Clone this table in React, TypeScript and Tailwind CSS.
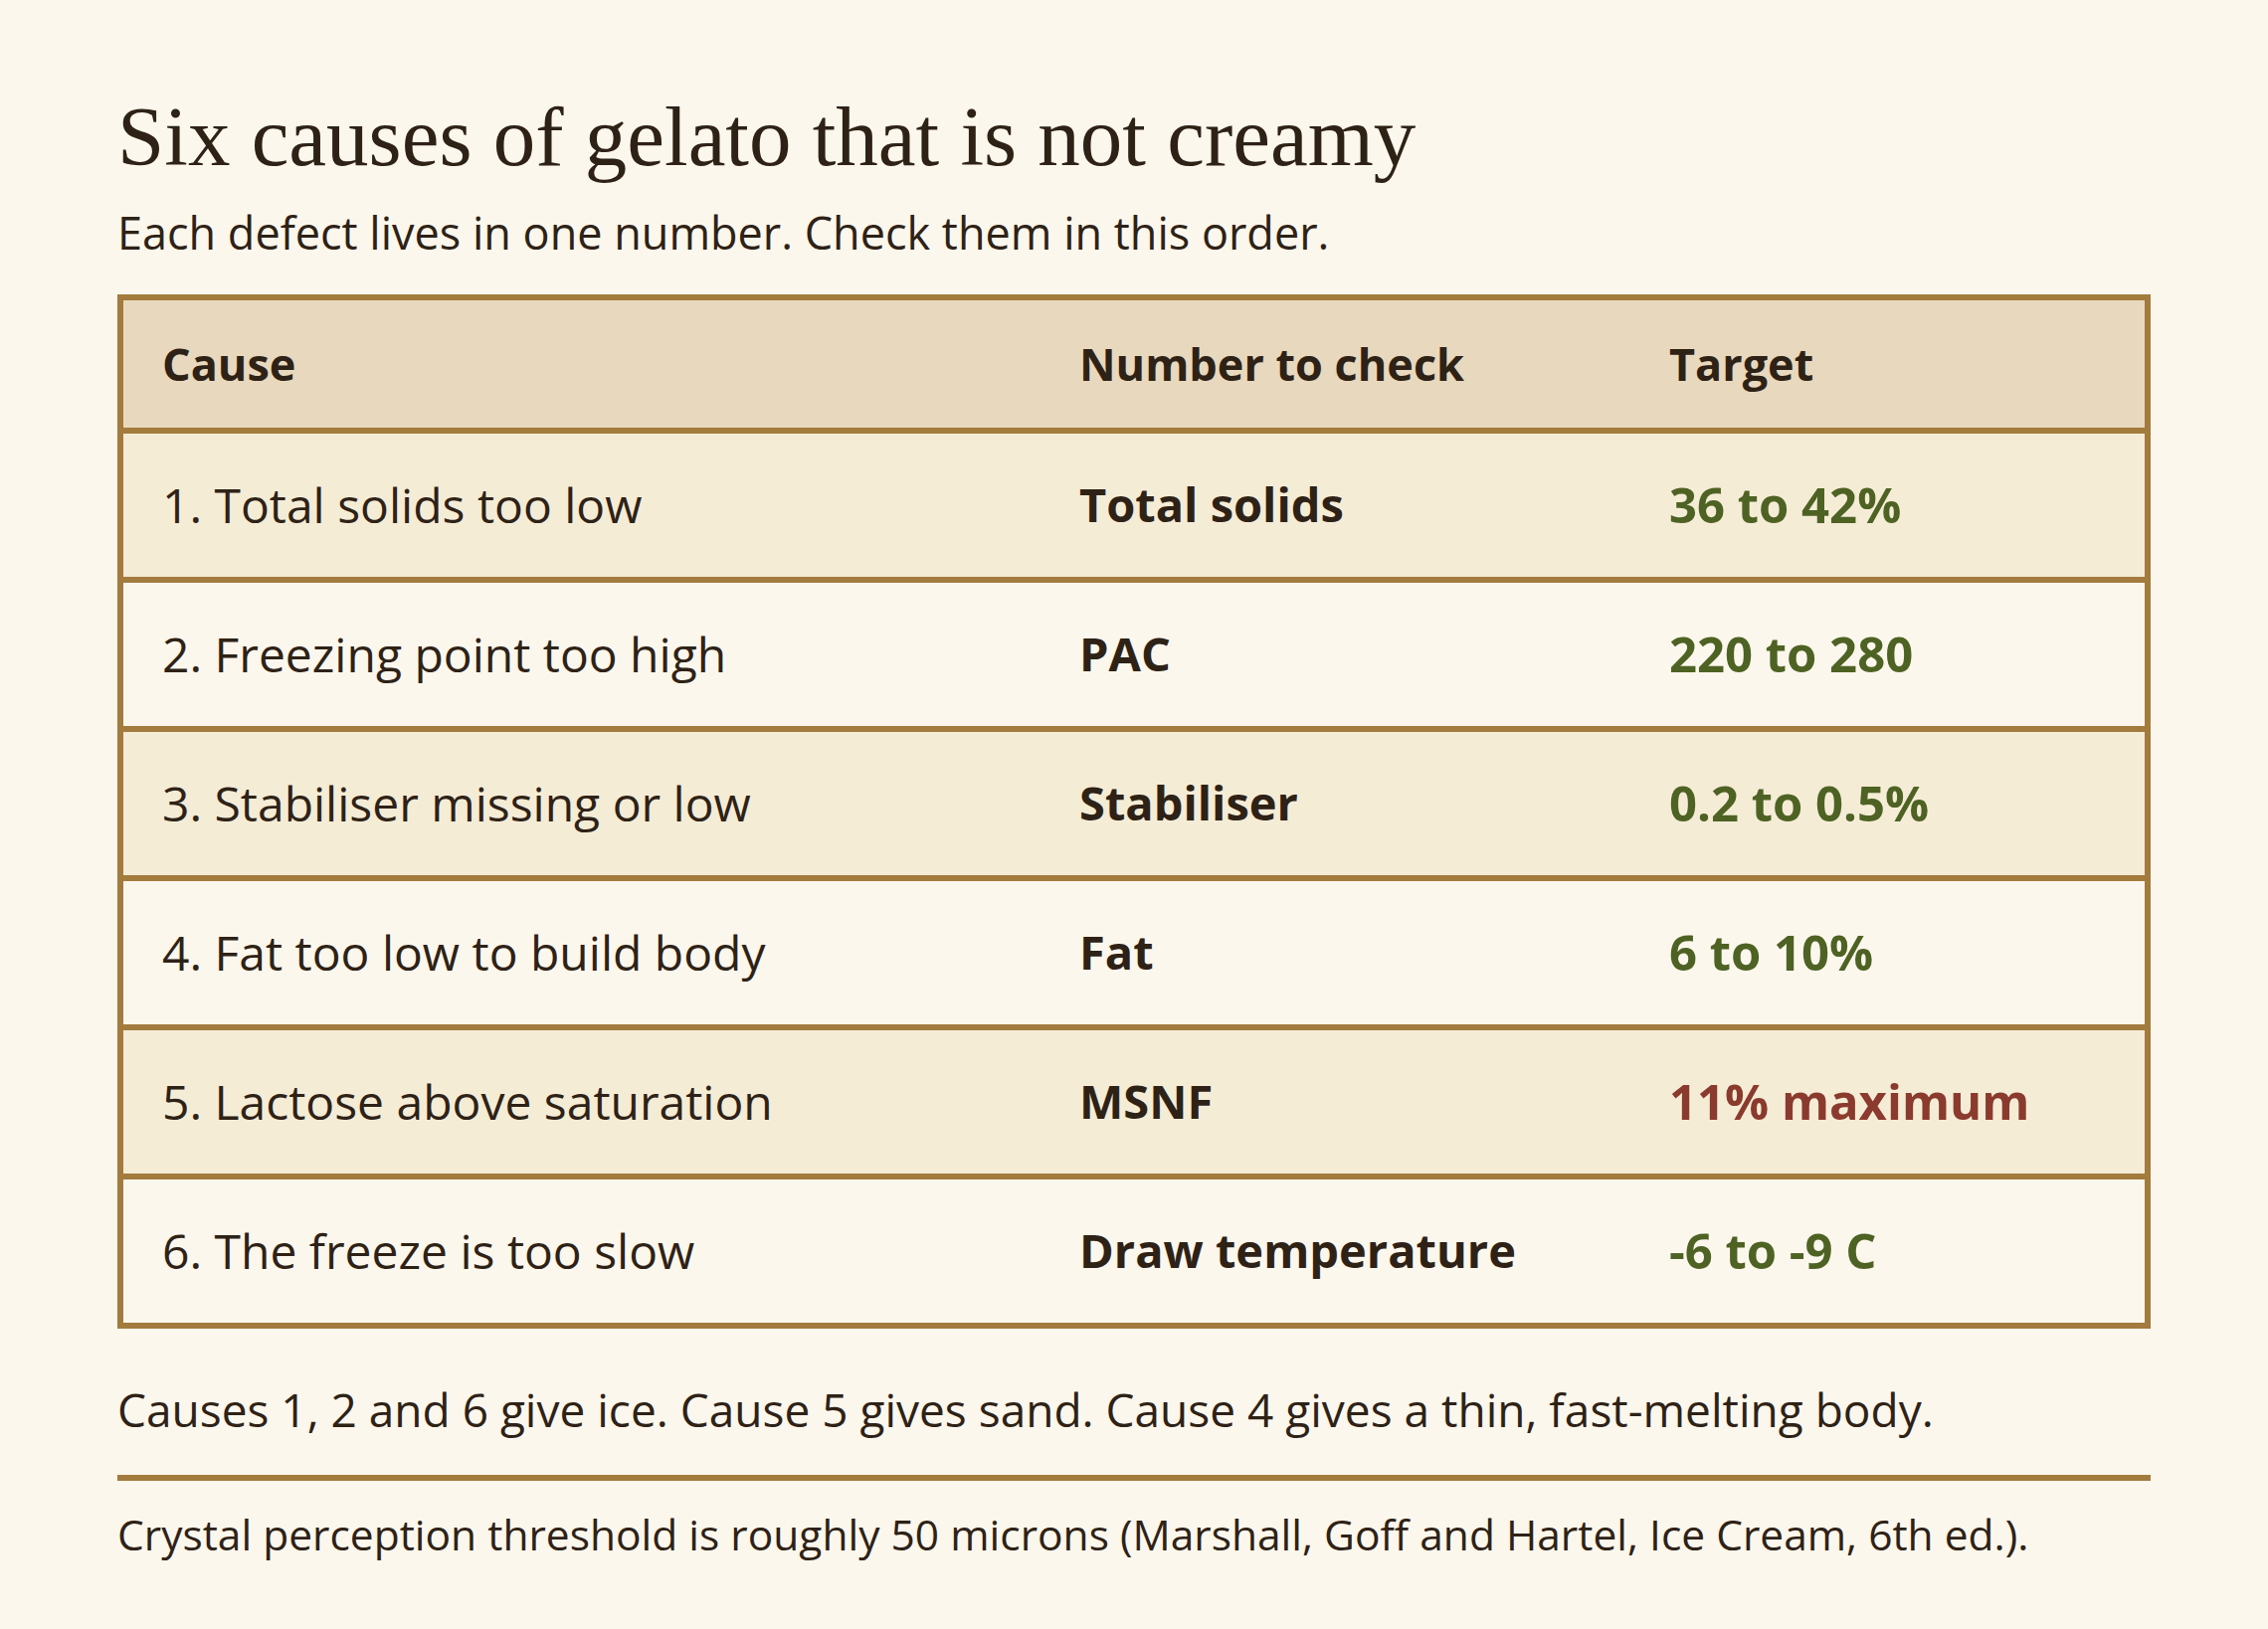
import React from "react";

type Row = {
  cause: string;
  metric: string;
  target: string;
  warn?: boolean;
};

const rows: Row[] = [
  { cause: "1. Total solids too low", metric: "Total solids", target: "36 to 42%" },
  { cause: "2. Freezing point too high", metric: "PAC", target: "220 to 280" },
  { cause: "3. Stabiliser missing or low", metric: "Stabiliser", target: "0.2 to 0.5%" },
  { cause: "4. Fat too low to build body", metric: "Fat", target: "6 to 10%" },
  { cause: "5. Lactose above saturation", metric: "MSNF", target: "11% maximum", warn: true },
  { cause: "6. The freeze is too slow", metric: "Draw temperature", target: "-6 to -9 C" },
];

const sans = "font-['Segoe_UI','Open_Sans','Noto_Sans',sans-serif]";

const App = () => {
  return (
    <div className={`min-h-screen bg-[#fcf7ec] text-[#2e2216] ${sans}`}>
      <div className="ml-[118px] w-[2044px] pt-[86px]">
        <h1 className="font-['Georgia','Liberation_Serif',serif] text-[85px] leading-[1.2] text-[#2e2216]">
          Six causes of gelato that is not creamy
        </h1>
        <p className="mt-[17px] text-[45px] leading-[1.3]">
          Each defect lives in one number. Check them in this order.
        </p>

        <table className="mt-[32px] w-full border-collapse border-[6px] border-[#a27b3d]">
          <thead>
            <tr className="h-[134px] border-b-[6px] border-[#a27b3d] bg-[#e8d8bd]">
              <th className="w-[925px] pl-[39px] text-left text-[45px] font-bold">Cause</th>
              <th className="w-[593px] pl-[39px] text-left text-[45px] font-bold">Number to check</th>
              <th className="pl-[39px] text-left text-[45px] font-bold">Target</th>
            </tr>
          </thead>
          <tbody>
            {rows.map((r, i) => (
              <tr
                key={r.cause}
                className={`h-[150px] border-[6px] border-[#a27b3d] ${
                  i % 2 === 0 ? "bg-[#f5ecd6]" : "bg-[#fcf7ec]"
                }`}
              >
                <td className="pl-[39px] text-[48px]">{r.cause}</td>
                <td className="pl-[39px] text-[47px] font-bold">{r.metric}</td>
                <td
                  className={`pl-[39px] text-[49px] font-bold ${
                    r.warn ? "text-[#8b3a2e]" : "text-[#4e6224]"
                  }`}
                >
                  {r.target}
                </td>
              </tr>
            ))}
          </tbody>
        </table>

        <p className="mt-[52px] text-[46px] leading-[1.3]">
          Causes 1, 2 and 6 give ice. Cause 5 gives sand. Cause 4 gives a thin, fast-melting body.
        </p>
        <div className="mt-[36px] h-[6px] bg-[#a27b3d]" />
        <p className="mt-[26px] text-[42.5px] leading-[1.3]">
          Crystal perception threshold is roughly 50 microns (Marshall, Goff and Hartel, Ice Cream, 6th ed.).
        </p>
      </div>
    </div>
  );
};

export default App;
